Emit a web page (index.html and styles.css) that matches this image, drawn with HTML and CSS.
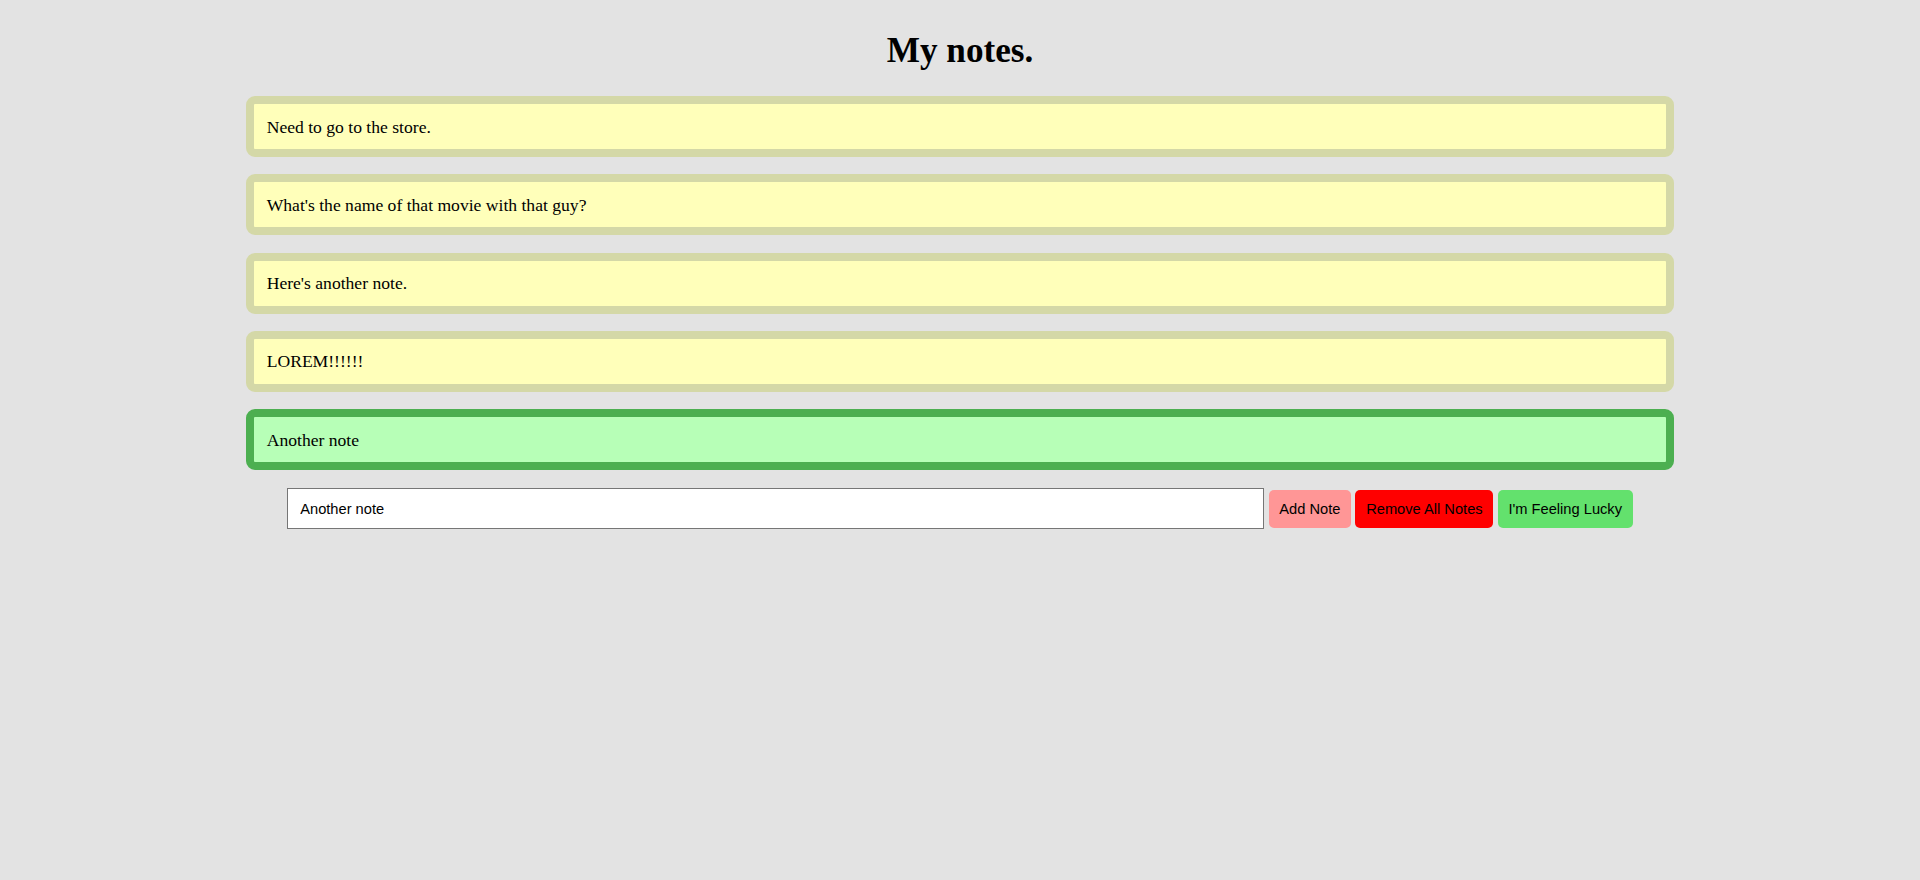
FILE: index.html
```html
<!DOCTYPE html>
<html lang="en">
<head>
<meta charset="utf-8">
<title>My notes.</title>
<link rel="stylesheet" href="styles.css">
</head>
<body>
<main class="page">
  <h1 class="title">My notes.</h1>
  <ul class="notes">
    <li class="note">Need to go to the store.</li>
    <li class="note">What's the name of that movie with that guy?</li>
    <li class="note">Here's another note.</li>
    <li class="note">LOREM!!!!!!</li>
    <li class="note note-active">Another note</li>
  </ul>
  <div class="controls">
    <input class="note-input" type="text" value="Another note">
    <button class="btn btn-add">Add Note</button>
    <button class="btn btn-remove">Remove All Notes</button>
    <button class="btn btn-lucky">I'm Feeling Lucky</button>
  </div>
</main>
</body>
</html>
```

FILE: styles.css
```css
html, body {
  margin: 0;
  padding: 0;
  background: #e3e3e3;
}

body {
  font-family: "Liberation Serif", "Times New Roman", serif;
  color: #000;
  min-height: 880px;
}

.page {
  width: 1428px;
  margin: 0 auto;
  padding-top: 31px;
  display: flex;
  flex-direction: column;
}

.title {
  margin: 0 0 25px;
  font-size: 35.2px;
  line-height: 40px;
  font-weight: bold;
  text-align: center;
}

.notes {
  list-style: none;
  margin: 0;
  padding: 0;
  display: flex;
  flex-direction: column;
  gap: 17.3px;
}

.note {
  border: 8px solid #d4d8a7;
  background: #ffffba;
  border-radius: 9px;
  padding: 12.5px 12.7px;
  font-size: 17.6px;
  line-height: 20px;
}

.note-active {
  border-color: #4caf50;
  background: #b7ffb7;
}

.controls {
  margin-top: 18.3px;
  display: flex;
  justify-content: center;
  align-items: center;
  gap: 4.3px;
}

.note-input {
  box-sizing: border-box;
  width: 977px;
  height: 41px;
  margin: 0;
  padding: 0 12px;
  border: 1px solid #767676;
  border-radius: 0;
  background: #fff;
  font-family: "Liberation Sans", Arial, sans-serif;
  font-size: 14.67px;
  color: #000;
  outline: none;
}

.btn {
  height: 38px;
  margin: 0;
  padding: 0 10.75px;
  border: none;
  border-radius: 5px;
  font-family: "Liberation Sans", Arial, sans-serif;
  font-size: 14.67px;
  color: #000;
  cursor: pointer;
}

.btn-add {
  background: #ff9696;
}

.btn-remove {
  background: #ff0000;
}

.btn-lucky {
  background: #63e16d;
}
```
